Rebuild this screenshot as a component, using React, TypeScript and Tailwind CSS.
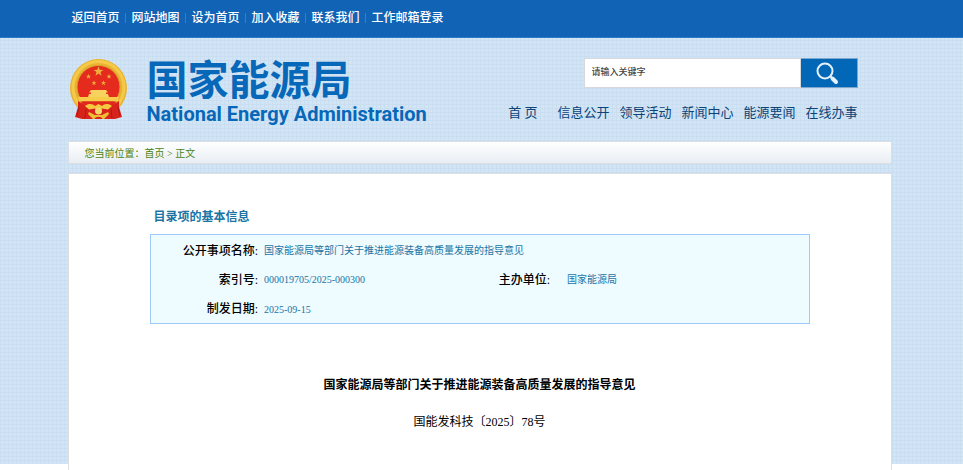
const topLinks = ['返回首页', '网站地图', '设为首页', '加入收藏', '联系我们', '工作邮箱登录'];

const navLinks = ['信息公开', '领导活动', '新闻中心', '能源要闻', '在线办事'];

const STAR = '0,-10 2.3,-3.2 9.5,-3.1 3.8,1.2 5.9,8.1 0,4 -5.9,8.1 -3.8,1.2 -9.5,-3.1 -2.3,-3.2';

function Emblem() {
  return (
    <svg viewBox="0 0 58 62" className="h-[62px] w-[58px] shrink-0" aria-hidden="true">
      {/* wheat ring */}
      <ellipse cx="28.500" cy="30" rx="28.500" ry="29" fill="#e9b233" />
      <ellipse cx="28.500" cy="29.500" rx="25.500" ry="26" fill="none" stroke="#f4ca48" strokeWidth="3" />
      <circle cx="28.500" cy="29" r="21.500" fill="#e52b1e" stroke="#d9a22a" strokeWidth="1" />
      {/* stars */}
      <g fill="#f0b03c">
        <polygon points={STAR} transform="translate(28.500 13.500) scale(.52)" />
        <polygon points={STAR} transform="translate(18.500 18.500) scale(.27)" />
        <polygon points={STAR} transform="translate(39 18.500) scale(.27)" />
        <polygon points={STAR} transform="translate(24 25) scale(.27)" />
        <polygon points={STAR} transform="translate(33.500 25) scale(.27)" />
      </g>
      {/* gate */}
      <path d="M21 32h15l2 2.500h-2V36h2l1 3H18l1-3h2v-1.500h-2z" fill="#f7d25c" />
      <path d="M8 39h41l-1.500 4.500h-38z" fill="#f6cc4a" />
      <path d="M10.500 43.500h36L43 48H14z" fill="#e0291c" />
      {/* ribbons and gear */}
      <path d="M8 43l8 5 12.500 3L41 48l8-5v6l3 10-7 2H12l-7-2 3-10z" fill="#d8231b" />
      <path d="M15 48c4-3 8-2 10 0l3.500-2 3.500 2c2-2 6-3 10 0l-4 3.500-6-1-3.500 2.500-3.500-2.500-6 1z" fill="#f4c83f" />
      <circle cx="28.500" cy="53" r="3.500" fill="#f7d668" />
      <path d="M19 54l6 3h7l6-3 1 2-5 5H23l-5-5z" fill="#efbd35" />
      <path d="M24.500 61c1-3 7-3 8 0z" fill="#d8231b" />
      <path d="M9 49l-2 9M48 49l2 9M16 51l-1 9M41 51l1 9" stroke="#b01915" strokeWidth="1" fill="none" />
    </svg>
  );
}

function TopBar() {
  return (
    <div className="h-[38px] border-b border-[#2f7cc6] bg-[#1063b5] pr-1">
      <nav className="mx-auto flex max-w-[824px] items-center px-1 pt-[9px] text-xs leading-[18px] font-medium text-white">
        {topLinks.map((label, i) => (
          <div key={label} className="flex items-center">
            {i > 0 && <span className="mr-[6px] ml-[5px] h-[10px] w-px bg-[#1f86dc]" />}
            <a href="#" className="whitespace-nowrap">{label}</a>
          </div>
        ))}
      </nav>
    </div>
  );
}

function Header() {
  return (
    <header className="flex h-[103px] justify-between pr-[34px]">
      <a href="#" className="mt-5 ml-[2px] flex gap-[19px] text-[#0768b9]">
        <Emblem />
        <div>
          <div className="text-[41px] leading-[46px] font-bold whitespace-nowrap">国家能源局</div>
          <div className="font-['Roboto'] text-[20px] leading-[20px] font-bold whitespace-nowrap">
            National Energy Administration
          </div>
        </div>
      </a>

      <div className="flex flex-col items-end pt-5">
        <form className="flex h-[30px] w-[274px]" onSubmit={e => e.preventDefault()}>
          <input
            type="text"
            aria-label="请输入关键字"
            placeholder="请输入关键字"
            className="min-w-0 flex-1 border border-[#d5d9dd] bg-white px-[7px] text-[9px] font-medium outline-none placeholder:text-[#444]"
          />
          <button
            type="submit"
            aria-label="搜索"
            className="flex w-[57px] items-center justify-center border border-l-0 border-[#7fa6cc] bg-[#0367b8]"
          >
            <svg viewBox="0 0 24 24" className="mr-1 size-6" fill="none" stroke="#e6f1fb" aria-hidden="true">
              <circle cx="10" cy="10" r="7.500" strokeWidth="2" />
              <path d="M15.500 15.500l1.500 1.500" strokeWidth="2" />
              <path d="M17.500 17.500l3.500 3.500" strokeWidth="4" strokeLinecap="round" />
            </svg>
          </button>
        </form>
        <nav className="mt-[15px] flex gap-[10px] text-[13px] leading-5 whitespace-nowrap text-[#0b4378]">
          <a href="#" className="mr-[10px]">首 页</a>
          {navLinks.map(label => (
            <a key={label} href="#">{label}</a>
          ))}
        </nav>
      </div>
    </header>
  );
}

function InfoTable() {
  const label = 'px-0 pt-[2px] pb-0 text-right text-xs font-medium text-black';
  const value = 'pt-[2px] pr-0 pb-0 text-left text-[10px] text-[#1b74a4]';

  return (
    <table className="h-[90px] w-full table-fixed border border-[#9dcaf8] bg-[#eefbff]">
      <colgroup>
        <col className="w-[108px]" />
        <col />
        <col className="w-[90px]" />
        <col className="w-[259px]" />
      </colgroup>
      <tbody>
        <tr>
          <th scope="row" className={label}>公开事项名称:</th>
          <td colSpan={3} className={`${value} pl-[6px]`}>国家能源局等部门关于推进能源装备高质量发展的指导意见</td>
        </tr>
        <tr>
          <th scope="row" className={label}>索引号:</th>
          <td className={`${value} pl-[6px]`}>000019705/2025-000300</td>
          <th scope="row" className={label}>主办单位:</th>
          <td className={`${value} pl-[17px]`}>国家能源局</td>
        </tr>
        <tr>
          <th scope="row" className={label}>制发日期:</th>
          <td colSpan={3} className={`${value} pl-[6px]`}>2025-09-15</td>
        </tr>
      </tbody>
    </table>
  );
}

export default function App() {
  return (
    <div className="relative isolate flex min-h-screen flex-col bg-white font-['Liberation_Serif','Noto_Sans_CJK_SC',serif]">
      {/* woven page backdrop, stops short of the page bottom */}
      <div className="absolute inset-x-0 top-0 -z-10 h-[464px] bg-[#d3e5f4] bg-[linear-gradient(#c9dff1_1px,transparent_1px),linear-gradient(90deg,#c9dff1_1px,transparent_1px)] bg-[size:4px_4px]" />

      <TopBar />

      <div className="flex flex-1 flex-col pr-1">
        <div className="mx-auto flex w-full max-w-[824px] flex-1 flex-col">
          <Header />

          <div className="h-[23px] border border-[#d9dfe5] bg-linear-to-b from-white to-[#e9eef3] px-4 text-[10px] leading-[23px] text-[#4a8410]">
            您当前位置：<a href="#">首页</a> &gt; <a href="#">正文</a>
          </div>

          <main className="mt-[9px] flex-1 border border-b-0 border-[#dcdfe2] bg-white px-[81px] pt-[33px]">
            <h2 className="pl-1 text-xs leading-5 font-bold text-[#1b74a4]">目录项的基本信息</h2>
            <div className="mt-[7px]">
              <InfoTable />
            </div>
            <h1 className="mt-[51px] text-center text-xs leading-5 font-bold text-black">
              国家能源局等部门关于推进能源装备高质量发展的指导意见
            </h1>
            <p className="mt-[17px] text-center text-xs leading-5 text-black">国能发科技〔2025〕78号</p>
          </main>
        </div>
      </div>
    </div>
  );
}
